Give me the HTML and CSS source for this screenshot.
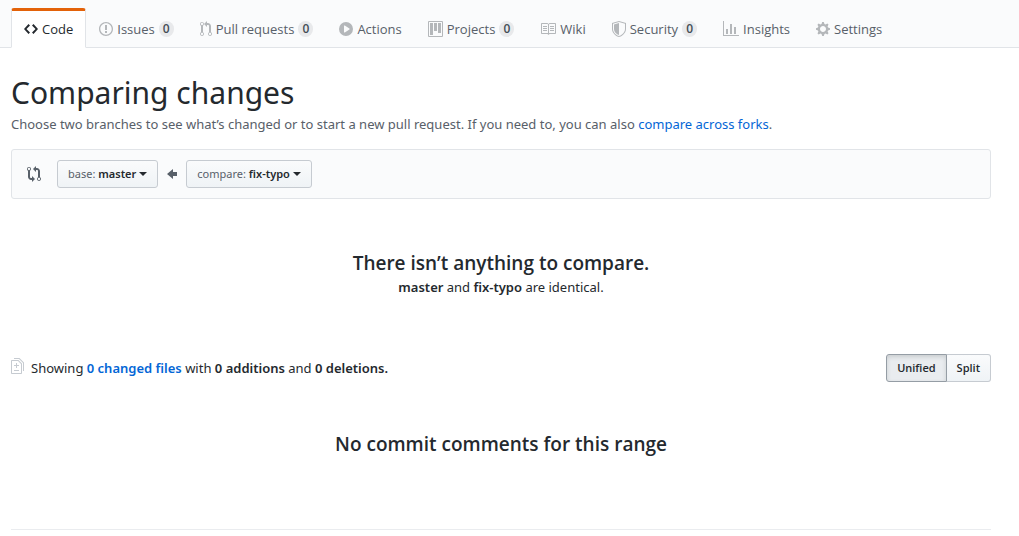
FILE: index.html
```html
<!DOCTYPE html>
<html lang="en">
<head>
<meta charset="utf-8">
<title>Comparing changes</title>
<link rel="stylesheet" href="styles.css">
</head>
<body>
<header class="pagehead">
  <nav class="reponav" aria-label="Repository">
    <a class="tab selected" href="#code"><svg class="icon" width="14" height="16" viewBox="0 0 14 16"><path fill-rule="evenodd" d="M9.500 3L8 4.500 11.500 8 8 11.500 9.500 13 14 8 9.500 3zm-5 0L0 8l4.500 5L6 11.500 2.500 8 6 4.500 4.500 3z"/></svg><span>Code</span></a>
    <a class="tab" href="#issues"><svg class="icon" width="14" height="16" viewBox="0 0 14 16"><path fill-rule="evenodd" d="M7 2.300c3.140 0 5.700 2.560 5.700 5.700s-2.560 5.700-5.700 5.700A5.710 5.710 0 0 1 1.300 8c0-3.140 2.560-5.700 5.700-5.700zM7 1C3.140 1 0 4.140 0 8s3.140 7 7 7 7-3.140 7-7-3.140-7-7-7zm1 3H6v5h2V4zm0 6H6v2h2v-2z"/></svg><span>Issues</span><span class="counter">0</span></a>
    <a class="tab" href="#pulls"><svg class="icon" width="12" height="16" viewBox="0 0 12 16"><path fill-rule="evenodd" d="M11 11.280V5c-.030-.780-.340-1.470-.940-2.060C9.460 2.350 8.780 2.030 8 2H7V0L4 3l3 3V4h1c.270.020.480.110.690.310.210.200.300.420.310.690v6.280A1.993 1.993 0 0 0 10 15a1.993 1.993 0 0 0 1-3.720zm-1 2.920c-.660 0-1.200-.550-1.200-1.200 0-.650.550-1.200 1.200-1.200.650 0 1.200.550 1.200 1.200 0 .650-.550 1.200-1.200 1.200zM4 3c0-1.110-.890-2-2-2a1.993 1.993 0 0 0-1 3.720v6.560A1.993 1.993 0 0 0 2 15a1.993 1.993 0 0 0 1-3.720V4.720c.590-.340 1-.980 1-1.720zm-.800 10c0 .660-.550 1.200-1.200 1.200-.650 0-1.200-.550-1.200-1.200 0-.650.550-1.200 1.200-1.200.650 0 1.200.550 1.200 1.200zM2 4.200C1.340 4.200.800 3.650.800 3c0-.650.550-1.200 1.200-1.200.650 0 1.200.550 1.200 1.200 0 .650-.550 1.200-1.200 1.200z"/></svg><span>Pull requests</span><span class="counter">0</span></a>
    <a class="tab" href="#actions"><svg class="icon" width="14" height="16" viewBox="0 0 14 16"><path fill-rule="evenodd" d="M14 8A7 7 0 1 1 0 8a7 7 0 0 1 14 0zm-8.223 3.482l4.599-3.066a.5.5 0 0 0 0-.832L5.777 4.518A.5.5 0 0 0 5 4.934v6.132a.5.5 0 0 0 .777.416z"/></svg><span>Actions</span></a>
    <a class="tab" href="#projects"><svg class="icon" width="15" height="16" viewBox="0 0 15 16"><path fill-rule="evenodd" d="M10 12h3V2h-3v10zm-4-2h3V2H6v8zm-4 4h3V2H2v12zm-1 1h13V1H1v14zM14 0H1a1 1 0 0 0-1 1v14a1 1 0 0 0 1 1h13a1 1 0 0 0 1-1V1a1 1 0 0 0-1-1z"/></svg><span>Projects</span><span class="counter">0</span></a>
    <a class="tab" href="#wiki"><svg class="icon" width="16" height="16" viewBox="0 0 16 16"><path fill-rule="evenodd" d="M3 5h4v1H3V5zm0 3h4V7H3v1zm0 2h4V9H3v1zm11-5h-4v1h4V5zm0 2h-4v1h4V7zm0 2h-4v1h4V9zm2-6v9c0 .550-.450 1-1 1H9.500l-1 1-1-1H2c-.550 0-1-.450-1-1V3c0-.550.450-1 1-1h5.500l1 1 1-1H15c.550 0 1 .450 1 1zm-8 .500L7.500 3H2v9h6V3.500zm7-.500H9.500l-.500.500V12h6V3z"/></svg><span>Wiki</span></a>
    <a class="tab" href="#security"><svg class="icon" width="14" height="16" viewBox="0 0 14 16"><path fill-rule="evenodd" d="M0 2l7-2 7 2v6.020C14 12.690 8.690 16 7 16c-1.690 0-7-3.310-7-7.980V2zm1 .750L7 1l6 1.750v5.268C13 12.104 8.449 15 7 15c-1.449 0-6-2.896-6-6.982V2.750zm1 .750L7 2v12c-1.207 0-5-2.482-5-5.985V3.500z"/></svg><span>Security</span><span class="counter">0</span></a>
    <a class="tab" href="#insights"><svg class="icon" width="16" height="16" viewBox="0 0 16 16"><path fill-rule="evenodd" d="M16 14v1H0V0h1v14h15zM5 13H3V8h2v5zm4 0H7V3h2v10zm4 0h-2V6h2v7z"/></svg><span>Insights</span></a>
    <a class="tab" href="#settings"><svg class="icon" width="14" height="16" viewBox="0 0 14 16"><path fill-rule="evenodd" d="M14 8.770v-1.600l-1.940-.640-.450-1.090.880-1.840-1.130-1.130-1.810.910-1.090-.450-.690-1.920h-1.600l-.630 1.940-1.110.450-1.840-.880-1.130 1.130.910 1.810-.450 1.090L0 7.230v1.590l1.940.640.450 1.090-.880 1.840 1.130 1.130 1.810-.910 1.090.450.690 1.920h1.590l.630-1.940 1.110-.450 1.840.880 1.130-1.130-.920-1.810.470-1.090L14 8.750v.020zM7 11c-1.660 0-3-1.340-3-3s1.340-3 3-3 3 1.340 3 3-1.340 3-3 3z"/></svg><span>Settings</span></a>
  </nav>
</header>
<main class="container">
  <h1 class="title">Comparing changes</h1>
  <p class="lead">Choose two branches to see what’s changed or to start a new pull request. If you need to, you can also <a href="#forks">compare across forks</a>.</p>
  <div class="range">
    <svg class="compare-icon" width="14" height="16" viewBox="0 0 14 16"><path fill-rule="evenodd" d="M5 12H4c-.270-.020-.480-.110-.690-.310-.210-.200-.300-.420-.310-.690V4.720A1.993 1.993 0 0 0 2 1a1.993 1.993 0 0 0-1 3.720V11c.030.780.340 1.470.940 2.060.600.590 1.280.910 2.060.940h1v2l3-3-3-3v2zM2 1.800c.660 0 1.200.550 1.200 1.200 0 .650-.550 1.200-1.200 1.200C1.350 4.200.800 3.650.800 3c0-.650.550-1.200 1.200-1.200zm11 9.480V5c-.030-.780-.340-1.470-.940-2.060-.600-.590-1.280-.910-2.060-.940H9V0L6 3l3 3V4h1c.270.020.480.110.690.310.210.200.300.420.310.690v6.280A1.993 1.993 0 0 0 12 15a1.993 1.993 0 0 0 1-3.720zm-1 2.920c-.660 0-1.200-.550-1.200-1.200 0-.650.550-1.200 1.200-1.200.650 0 1.200.550 1.200 1.200 0 .650-.550 1.200-1.200 1.200z"/></svg>
    <button class="btn branch" type="button"><span>base: <b>master</b></span><i class="caret"></i></button>
    <svg class="arrow" width="10" height="16" viewBox="0 0 10 16"><path fill-rule="evenodd" d="M6 3L0 8l6 5v-3h4V6H6z"/></svg>
    <button class="btn branch" type="button"><span>compare: <b>fix-typo</b></span><i class="caret"></i></button>
  </div>
  <section class="blankslate">
    <h2 class="heading">There isn’t anything to compare.</h2>
    <p class="note"><b>master</b> and <b>fix-typo</b> are identical.</p>
  </section>
  <div class="toc">
    <svg class="diff-icon" width="13" height="16" viewBox="0 0 13 16"><path fill-rule="evenodd" d="M6 7h2v1H6v2H5V8H3V7h2V5h1v2zm-3 6h5v-1H3v1zM7.500 2L11 5.500V15c0 .550-.450 1-1 1H1c-.550 0-1-.450-1-1V3c0-.550.450-1 1-1h6.500zM10 6L7 3H1v12h9V6zM8.500 0H3v1h5l4 4v8h1V4.500L8.500 0z"/></svg>
    <p class="summary">Showing <a href="#files"><b>0 changed files</b></a> with <b>0 additions</b> and <b>0 deletions.</b></p>
    <div class="btn-group">
      <button class="btn active" type="button" aria-pressed="true">Unified</button>
      <button class="btn" type="button" aria-pressed="false">Split</button>
    </div>
  </div>
  <h2 class="heading comments">No commit comments for this range</h2>
</main>
<footer class="footer"></footer>
</body>
</html>
```

FILE: styles.css
```css
* {
  box-sizing: border-box;
}

body {
  margin: 0;
  background: #fff;
  color: #24292e;
  font: 13px/20px "Noto Sans", "Open Sans", sans-serif;
}

h1, h2, p {
  margin: 0;
}

b {
  font-weight: 600;
}

a {
  color: #0366d6;
  text-decoration: none;
}

svg {
  flex: none;
  fill: currentColor;
}

.pagehead {
  padding: 8px 11px 0;
  background: #fafbfc;
  border-bottom: 1px solid #e1e4e8;
  font-family: "Open Sans", "Noto Sans", sans-serif;
}

.reponav {
  display: flex;
  margin-bottom: -1px;
}

.tab {
  display: flex;
  align-items: center;
  gap: 4px;
  height: 40px;
  padding: 3px 12px 0;
  border: 1px solid transparent;
  border-top: 0;
  color: #586069;
  white-space: nowrap;
}

.icon {
  color: #b4b7ba;
}

.tab.selected {
  padding-top: 0;
  background: #fff;
  border-color: #e1e4e8;
  border-top: 3px solid #e36209;
  border-bottom-color: #fff;
  border-radius: 3px 3px 0 0;
  color: #24292e;
}

.selected .icon {
  color: #24292e;
}

.counter {
  min-width: 15px;
  border-radius: 20px;
  background: rgba(27, 31, 35, .08);
  color: #444d56;
  font-size: 12px;
  font-weight: 600;
  line-height: 16px;
  text-align: center;
}

.container {
  padding: 24px 28px 0 11px;
}

.title {
  font-size: 30px;
  font-weight: 400;
  line-height: 42px;
}

.lead {
  color: #586069;
}

.range {
  display: flex;
  align-items: center;
  margin-top: 15px;
  padding: 10px 15px;
  background: #fafbfc;
  border: 1px solid #e1e4e8;
  border-radius: 3px;
  color: #586069;
}

.compare-icon {
  margin-right: 16px;
}

.arrow {
  margin: 0 9px;
}

.btn {
  padding: 3px 10px;
  border: 1px solid #c6cbd1;
  border-radius: 3px;
  background: linear-gradient(#fafbfc, #eff3f6);
  color: #24292e;
  font: 600 11px/20px "Open Sans", "Noto Sans", sans-serif;
}

.branch {
  display: flex;
  align-items: center;
  gap: 3px;
  color: #586069;
  font-family: "Noto Sans", "Open Sans", sans-serif;
  font-weight: 400;
}

.branch b {
  color: #24292e;
}

.caret {
  border: 4px solid transparent;
  border-top-color: #24292e;
  border-bottom: 0;
}

.blankslate {
  padding: 50px 32px 52px;
  text-align: center;
}

.heading {
  font-family: "Open Sans", "Noto Sans", sans-serif;
  font-size: 19px;
  font-weight: 600;
  line-height: 28px;
  text-align: center;
}

.toc {
  display: flex;
  align-items: center;
  gap: 7px;
  margin-top: 5px;
}

.diff-icon {
  margin-bottom: 5px;
  color: #c6cbd1;
}

.summary {
  flex: 1;
}

.btn-group {
  display: flex;
}

.btn-group .btn:first-child {
  border-radius: 3px 0 0 3px;
}

.btn-group .btn:last-child {
  border-left: 0;
  border-radius: 0 3px 3px 0;
}

.btn.active {
  background: #e9ecef;
  border-color: #959da5;
  box-shadow: inset 0 2px 4px rgba(27, 31, 35, .15);
}

.comments {
  margin-top: 48px;
}

.footer {
  margin: 71px 28px 0 11px;
  border-top: 1px solid #eaecef;
}
```
